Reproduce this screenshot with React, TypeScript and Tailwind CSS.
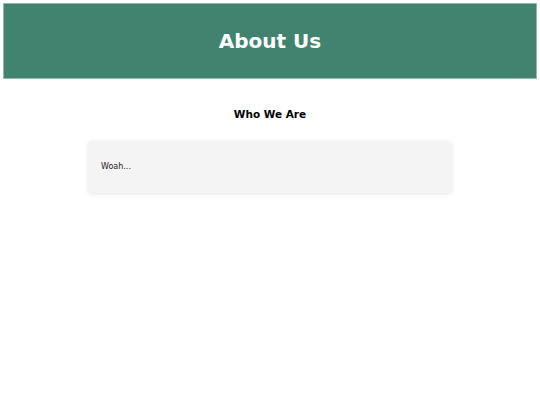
export default function App() {
  return (
    <div className="min-h-screen bg-white p-[3px] font-['DejaVu_Sans',sans-serif]">
      {/* Banner */}
      <header className="flex h-[76px] items-center justify-center border border-[#8fb9ab] bg-[#428370]">
        <h1 className="text-[20px] font-bold text-white">About Us</h1>
      </header>

      <section className="mx-auto mt-[28px] w-[364px]">
        <h2 className="text-center text-[10.5px] font-bold text-black">Who We Are</h2>
        <div className="mt-[18px] flex h-[52px] items-center rounded-[4px] bg-[#f4f4f4] px-[13px] shadow-[0_1px_4px_rgba(0,0,0,0.1)]">
          <p className="text-[8px] text-[#222]">Woah...</p>
        </div>
      </section>
    </div>
  );
}
